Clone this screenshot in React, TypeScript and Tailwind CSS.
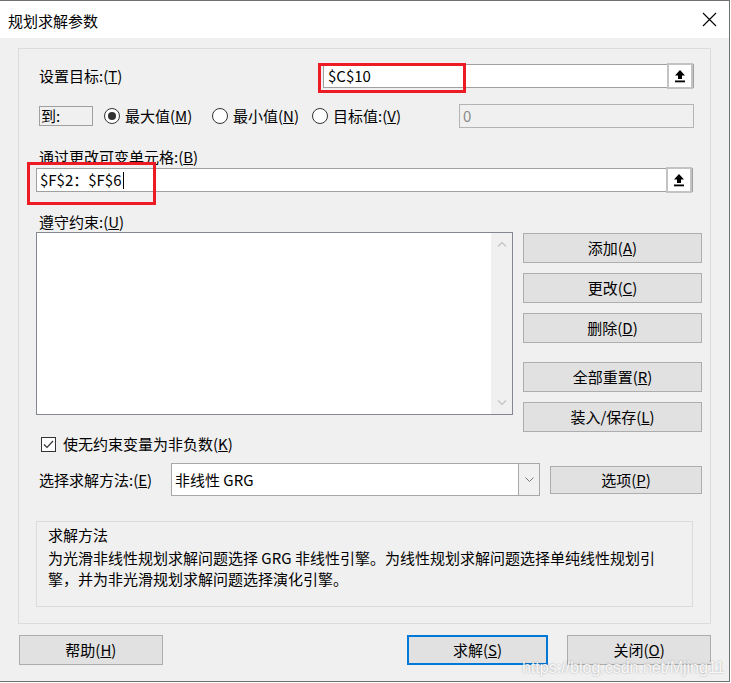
import React from "react";

const font = "font-['Microsoft_YaHei_UI','Noto_Sans_CJK_SC',sans-serif]";

function Btn({
  label,
  hotkey,
  tail = ")",
  className = "",
}: {
  label: string;
  hotkey: string;
  tail?: string;
  className?: string;
}) {
  return (
    <div
      className={`flex items-center justify-center bg-[#e1e1e1] border border-[#adadad] text-[15px] leading-[20px] text-black ${className}`}
    >
      {label}(<u>{hotkey}</u>
      {tail}
    </div>
  );
}

function PickButton() {
  return (
    <div className="ml-auto w-[26px] h-[26px] -my-px border-2 border-[#c3c3c3] bg-white flex items-center justify-center">
      <svg width="12" height="14" viewBox="0 0 12 14">
        <polygon points="6,1 1,6.5 4,6.5 4,10 8,10 8,6.5 11,6.5" fill="#000" />
        <rect x="1" y="11.5" width="10" height="1.8" fill="#000" />
      </svg>
    </div>
  );
}

function Radio({ checked, label, hotkey, tail = ")", className = "" }: { checked?: boolean; label: string; hotkey: string; tail?: string; className?: string }) {
  return (
    <div className={`flex items-center ${className}`}>
      <div className="w-[16px] h-[16px] rounded-full border border-[#333] bg-white flex items-center justify-center">
        {checked && <div className="w-[8px] h-[8px] rounded-full bg-[#333]" />}
      </div>
      <span className="ml-[5px] text-[15px] leading-[20px]">
        {label}(<u>{hotkey}</u>
        {tail}
      </span>
    </div>
  );
}

export default function App() {
  return (
    <div className={`relative w-[730px] h-[682px] flex flex-col bg-[#f0f0f0] border-t border-r border-b border-[#707070] text-black ${font}`}>
      {/* title bar */}
      <div className="h-[37px] bg-white flex items-center pl-[8px] pr-[12px]">
        <span className="text-[15px] leading-[20px] mt-[2px]">规划求解参数</span>
        <svg className="ml-auto" width="15" height="15" viewBox="0 0 15 15">
          <path d="M1 1 L14 14 M14 1 L1 14" stroke="#000" strokeWidth="1.1" />
        </svg>
      </div>

      <div className="flex-1 px-[18px] pt-[10px]">
        {/* outer group */}
        <div className="w-[693px] border border-[#dcdcdc] pl-[17px] pb-[16px]">
          {/* target */}
          <div className="mt-[15px] h-[24px] flex items-center">
            <span className="ml-[3px] w-[284px] text-[15px] leading-[20px]">
              设置目标:(<u>T</u>)
            </span>
            <div className="w-[371px] h-[24px] bg-white border border-[#a0a0a0] flex items-center pl-[4px] text-[15px] leading-[20px]">
              $C$10
              <PickButton />
            </div>
          </div>

          {/* to */}
          <div className="mt-[16px] h-[24px] flex items-center">
            <div className="ml-[3px] w-[54px] h-[20px] border border-[#a0a0a0] text-[15px] leading-[18px] pl-px">
              到:
            </div>
            <Radio checked label="最大值" hotkey="M" className="ml-[11px] w-[108px]" />
            <Radio label="最小值" hotkey="N" className="w-[100px]" />
            <Radio label="目标值:" hotkey="V" className="w-[147px]" />
            <div className="w-[235px] h-[24px] border border-[#b4b4b4] bg-[#f0f0f0] pl-[3px] text-[15px] leading-[22px] text-[#8a8a8a]">
              0
            </div>
          </div>

          <div className="mt-[19px] ml-[3px] h-[20px] text-[15px] leading-[20px]">
            通过更改可变单元格:(<u>B</u>)
          </div>
          <div className="mt-px w-[657px] h-[24px] bg-white border border-[#a0a0a0] flex items-center pl-[3px] text-[15px] leading-[20px]">
            $F$2：$F$6
            <span className="w-px h-[17px] bg-black ml-px" />
            <PickButton />
          </div>

          <div className="mt-[20px] ml-[3px] h-[20px] text-[15px] leading-[20px]">
            遵守约束:(<u>U</u>)
          </div>
          <div className="flex">
            <div className="w-[477px] h-[183px] border border-[#828790] flex">
              <div className="flex-1 bg-white" />
              <div className="w-[21px] bg-[#f0f0f0] flex flex-col items-center justify-between py-[8px]">
                <svg width="10" height="6" viewBox="0 0 10 6">
                  <path d="M1 5.5 L5 1.5 L9 5.5" stroke="#c2c2c2" strokeWidth="1.2" fill="none" />
                </svg>
                <svg width="10" height="6" viewBox="0 0 10 6">
                  <path d="M1 0.5 L5 4.5 L9 0.5" stroke="#c2c2c2" strokeWidth="1.2" fill="none" />
                </svg>
              </div>
            </div>
            <div className="ml-[10px] w-[179px] pt-px flex flex-col">
              <Btn label="添加" hotkey="A" className="h-[30px]" />
              <Btn label="更改" hotkey="C" className="h-[30px] mt-[10px]" />
              <Btn label="删除" hotkey="D" className="h-[30px] mt-[10px]" />
              <Btn label="全部重置" hotkey="R" className="h-[30px] mt-[19px]" />
              <Btn label="装入/保存" hotkey="L" className="h-[30px] mt-[10px]" />
            </div>
          </div>

          {/* checkbox */}
          <div className="mt-[2px] h-[20px] flex items-center">
            <div className="ml-[5px] w-[15px] h-[15px] border border-[#333] bg-white flex items-center justify-center">
              <svg width="11" height="9" viewBox="0 0 11 9">
                <path d="M1 4.5 L4 7.5 L10 1" stroke="#333" strokeWidth="1.2" fill="none" />
              </svg>
            </div>
            <span className="ml-[7px] text-[15px] leading-[20px]">
              使无约束变量为非负数(<u>K</u>)
            </span>
          </div>

          {/* method */}
          <div className="mt-[9px] h-[33px] flex items-center">
            <span className="ml-[3px] w-[132px] text-[15px] leading-[20px]">
              选择求解方法:(<u>E</u>)
            </span>
            <div className="w-[369px] h-[33px] border border-[#a8a8a8] bg-white flex">
              <span className="flex-1 pl-[3px] text-[15px] leading-[31px]">非线性 GRG</span>
              <div className="w-[21px] border-l border-[#a8a8a8] bg-[#f0f0f0] flex items-center justify-center">
                <svg width="9" height="5" viewBox="0 0 9 5">
                  <path d="M0.5 0.5 L4.5 4.5 L8.5 0.5" stroke="#7a7a7a" strokeWidth="1" fill="none" />
                </svg>
              </div>
            </div>
            <Btn label="选项" hotkey="P" className="ml-[10px] w-[152px] h-[28px]" />
          </div>

          {/* info box */}
          <div className="mt-[25px] w-[657px] h-[86px] border border-[#dcdcdc] pl-[11px] pt-[2px] text-[15px] leading-[21px]">
            <div>求解方法</div>
            <div className="mt-[2px]">
              为光滑非线性规划求解问题选择 GRG 非线性引擎。为线性规划求解问题选择单纯线性规划引
              <br />
              擎，并为非光滑规划求解问题选择演化引擎。
            </div>
          </div>
        </div>

        {/* bottom buttons */}
        <div className="mt-[11px] flex">
          <Btn label="帮助" hotkey="H" className="ml-px w-[144px] h-[30px]" />
          <div className="ml-[244px] w-[142px] h-[30px] border-2 border-[#0078d7] bg-[#e1e1e1] flex items-center justify-center text-[15px] leading-[20px]">
            求解(<u>S</u>)
          </div>
          <Btn label="关闭" hotkey="O" className="ml-[19px] w-[144px] h-[30px]" />
        </div>
      </div>

      {/* annotation boxes */}
      <div className="absolute left-[318px] top-[62px] w-[148px] h-[30px] border-[3px] border-[#ed1c24]" />
      <div className="absolute left-[27px] top-[161px] w-[129px] h-[43px] border-[3px] border-[#ed1c24]" />

      {/* watermark */}
      <div className="absolute left-[522px] top-[659px] font-['Liberation_Sans',sans-serif] text-[16px] leading-[16px] text-white/90 [text-shadow:0_0_2px_rgba(0,0,0,0.35)]">
        https://blog.csdn.net/Mjing11
      </div>
    </div>
  );
}
